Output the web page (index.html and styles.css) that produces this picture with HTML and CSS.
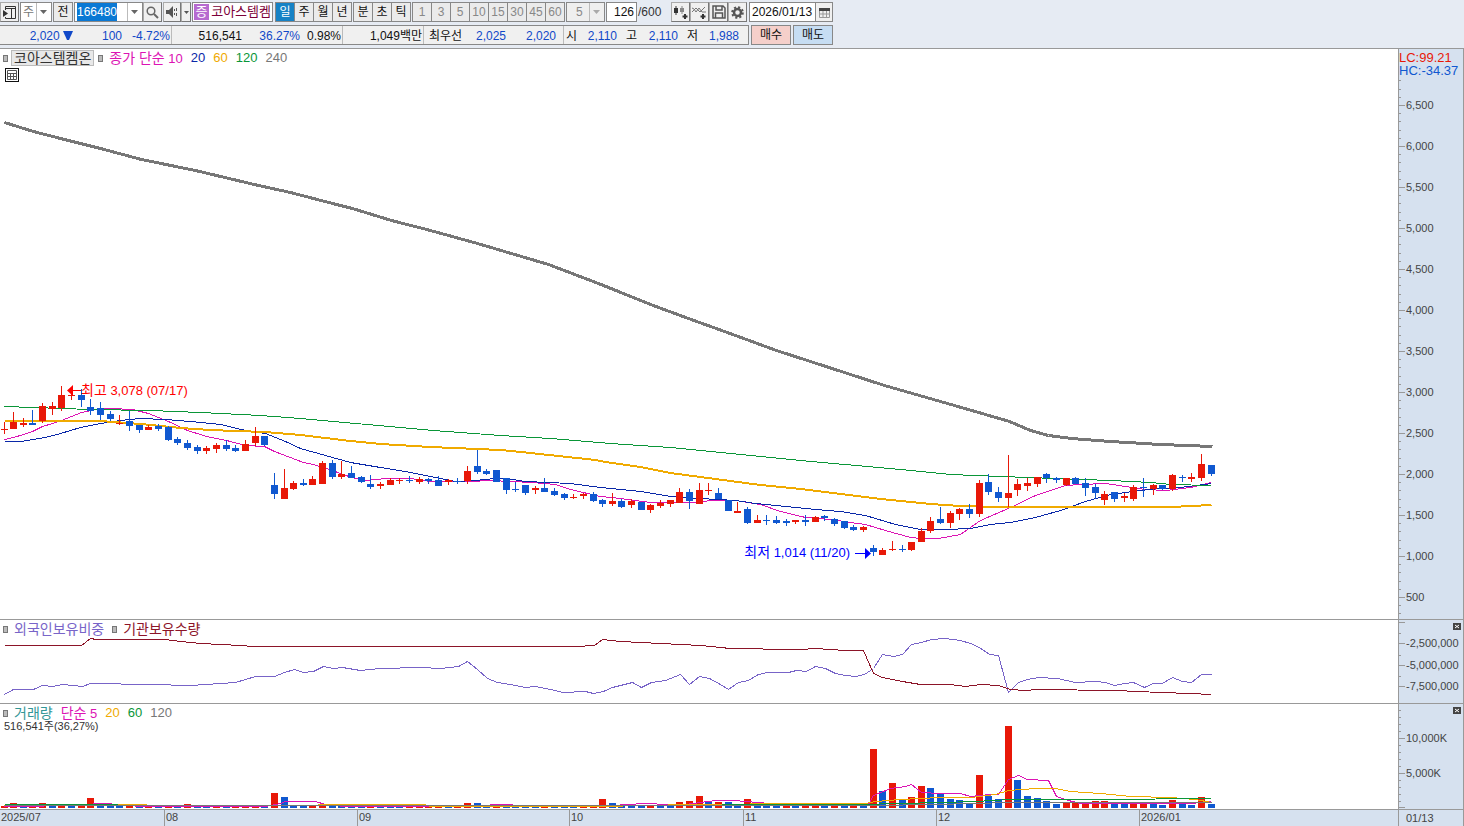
FILE: index.html
```html
<!DOCTYPE html>
<html lang="ko">

<head>
  <meta charset="utf-8">
  <meta name="viewport" content="width=device-width, initial-scale=1">
  <title>코아스템켐온 - 종합차트</title>
  <link rel="stylesheet" href="styles.css">
</head>

<body>
  <header>
    <div class="toolbar">
      <button class="tool" aria-label="패널">
        <svg width="15" height="13" viewBox="0 0 15 13"><path d="M3.500 4V.5h10v12h-10V11M4 2.500h9M9.500 3v9" fill="none" stroke="#333"/><path d="M1 4l5 3.500L1 11z" fill="#333"/></svg>
      </button>
      <span class="combo market">
        <select aria-label="시장"><option>주</option></select>
        <svg class="arrow" width="7" height="4"><path d="M0 0h7L3.500 4z"/></svg>
      </span>
      <button class="key prev">전</button>
      <span class="combo code">
        <input id="code" type="text" value="166480" aria-label="종목코드">
        <svg class="arrow" width="7" height="4"><path d="M0 0h7L3.500 4z"/></svg>
      </span>
      <button class="tool" aria-label="검색">
        <svg width="13" height="13" viewBox="0 0 13 13" fill="none" stroke="#666"><circle cx="5" cy="5" r="3.800" stroke-width="1.500"/><path d="M8 8l4 4" stroke-width="2"/></svg>
      </button>
      <button class="tool speaker" aria-label="소리">
        <svg width="13" height="12" viewBox="0 0 13 12" fill="#555"><path d="M0 4h3l4-4v12L3 8H0zM8 3h1v2H8zM8 7h1v2H8zM10 2h1v3h-1zM10 7h1v3h-1z"/></svg>
      </button>
      <button class="tool drop" aria-label="소리 설정">
        <svg width="5" height="3"><path d="M0 0h5L2.500 3z" fill="#555"/></svg>
      </button>
      <div class="stock"><b>증</b><span>코아스템켐</span></div>
      <div class="keys">
        <button class="key on">일</button><button class="key">주</button><button class="key">월</button><button class="key">년</button>
      </div>
      <div class="keys units">
        <button class="key">분</button><button class="key">초</button><button class="key">틱</button>
      </div>
      <div class="keys minutes">
        <button class="key" disabled>1</button><button class="key" disabled>3</button><button class="key" disabled>5</button><button class="key" disabled>10</button><button class="key" disabled>15</button><button class="key" disabled>30</button><button class="key" disabled>45</button><button class="key" disabled>60</button>
      </div>
      <span class="combo custom">
        <select aria-label="분 간격" disabled><option>5</option></select>
        <svg class="arrow" width="7" height="4"><path d="M0 0h7L3.500 4z"/></svg>
      </span>
      <label class="count"><input type="text" value="126" aria-label="봉 개수">/600</label>
      <div class="keys tools">
        <button class="tool" aria-label="차트 추가">
          <svg width="15" height="15" viewBox="0 0 15 15"><path d="M1 3h4v5H1zM2.500 1h1v9h-1z" fill="#333"/><path d="M7 3h4v4H7zM8.500 1h1v8h-1z" fill="#888"/><path d="M12 9v5M9.500 11.500h5" stroke="#333" stroke-width="2"/></svg>
        </button><button class="tool" aria-label="지표 추가">
          <svg width="15" height="15" viewBox="0 0 15 15" fill="none"><path d="M0 7l4-4 4 4 5-5M0 3l2 1 2 3 3-4 3 4 4 0" stroke="#777"/><path d="M11 9v5M8.500 11.500h5" stroke="#333" stroke-width="2"/></svg>
        </button><button class="tool" aria-label="저장">
          <svg width="14" height="14" viewBox="0 0 14 14" fill="none" stroke="#555" stroke-width="1.500"><path d="M1 1h10l2 2v10H1zM4 1v4h6V1M3.500 13V8h7v5"/></svg>
        </button><button class="tool" aria-label="설정">
          <svg width="13" height="13" viewBox="0 0 13 13" fill="none" stroke="#555"><circle cx="6.500" cy="6.500" r="3.500" stroke-width="2.500"/><circle cx="6.500" cy="6.500" r="5.300" stroke-width="2" stroke-dasharray="2.100 2.060"/></svg>
        </button>
      </div>
      <div class="date">
        <input type="text" value="2026/01/13" aria-label="기준일">
        <button aria-label="달력"><svg width="11" height="11" viewBox="0 0 11 11"><path d="M0 1h11v3H0z" fill="#444"/><path d="M.5 4v6.500h10V4M4 4v6M7.500 4v6M0 7h11" fill="none" stroke="#999"/></svg></button>
      </div>
    </div>

    <div class="quote">
      <div class="strip">
        <div class="cell price"><span>2,020 <svg width="10" height="9"><path d="M0 0h10L6 9H4z" fill="#1048c8"/></svg></span><span>100</span><span>-4.72%</span></div>
        <div class="cell volume"><span class="dark">516,541</span><span>36.27%</span><span class="dark">0.98%</span></div>
        <div class="cell amount"><span class="dark">1,049백만</span></div>
        <div class="cell best"><span class="dark">최우선</span><span>2,025</span><span>2,020</span></div>
        <div class="cell ohl"><span class="dark">시</span><span>2,110</span><span class="dark">고</span><span>2,110</span><span class="dark">저</span><span>1,988</span></div>
      </div>
      <button class="order buy">매수</button>
      <button class="order sell">매도</button>
    </div>
  </header>

  <main class="chart">
    <section class="panel">
      <svg id="price"></svg>
      <div class="legend">
        <i></i><button class="name">코아스템켐온</button><i></i>
        <span class="c-magenta"><em>종가 단순</em> 10</span><span class="c-navy">20</span><span class="c-yellow">60</span><span class="c-green">120</span><span class="c-gray">240</span>
      </div>
      <button class="grid-btn" aria-label="표"><svg width="10" height="10" viewBox="0 0 10 10" fill="none" stroke="#555"><path d="M.5.5h9v9h-9zM0 3.500h10M0 6.500h10M3.500 3v7M6.500 3v7"/></svg></button>
    </section>
    <aside class="axis">
      <svg id="price-axis"></svg>
      <div class="range"><span class="c-red">LC:99.21</span><span class="c-blue">HC:-34.37</span></div>
    </aside>

    <section class="panel">
      <svg id="holding"></svg>
      <div class="legend"><i></i><em class="c-purple">외국인보유비중</em><i></i><em class="c-maroon">기관보유수량</em></div>
    </section>
    <aside class="axis">
      <svg id="holding-axis"></svg>
      <button class="close" aria-label="닫기"><svg width="8" height="7"><path d="M2 2l4 3M6 2L2 5" stroke="#fff"/></svg></button>
    </aside>

    <section class="panel">
      <svg id="volume"></svg>
      <div class="legend"><i></i><em class="c-teal">거래량</em><span class="c-magenta"><em>단순</em> 5</span><span class="c-yellow">20</span><span class="c-green">60</span><span class="c-gray">120</span></div>
      <p class="now">516,541주(36,27%)</p>
    </section>
    <aside class="axis">
      <svg id="volume-axis"></svg>
      <button class="close" aria-label="닫기"><svg width="8" height="7"><path d="M2 2l4 3M6 2L2 5" stroke="#fff"/></svg></button>
    </aside>

    <div class="months"><svg id="months"></svg></div>
    <div class="last-day">01/13</div>
  </main>

  <script src="chart.js"></script>
</body>

</html>
```
FILE: styles.css
```css
* {
  box-sizing: border-box;
}

body {
  margin: 0;
  height: 100vh;
  display: flex;
  flex-direction: column;
  overflow: hidden;
  background: #fff;
  color: #111;
  font: 12px "Liberation Sans", "Noto Sans CJK KR", sans-serif;
}

button,
input,
select {
  margin: 0;
  padding: 0;
  font: inherit;
  color: inherit;
  border: 1px solid #888;
  border-radius: 0;
  appearance: none;
}

svg {
  display: block;
}

header {
  flex: none;
  height: 49px;
  padding-top: 2px;
  background: #e6ebf3;
  border-bottom: 1px solid #999;
}

/* toolbar */

.toolbar {
  display: flex;
  height: 20px;
  margin-bottom: 3px;
  white-space: nowrap;
}

.toolbar > * {
  flex: none;
}

.tool {
  width: 19px;
  height: 20px;
  display: flex;
  align-items: center;
  justify-content: center;
  background: #f0f0f0;
  border-color: #aaa #777 #777 #aaa;
}

.tool.speaker {
  width: 18px;
  margin-left: 1px;
}

.tool.drop {
  width: 10px;
}

.combo {
  position: relative;
  display: flex;
  height: 20px;
}

.combo select,
.combo input {
  width: 100%;
  background: #fff;
  line-height: 18px;
}

.combo::after {
  content: "";
  position: absolute;
  top: 1px;
  right: 15px;
  height: 18px;
  border-left: 1px solid #bbb;
}

.arrow {
  position: absolute;
  right: 5px;
  top: 8px;
  fill: #666;
  pointer-events: none;
}

.market {
  width: 32px;
  margin: 0 1px;
}

.market select {
  padding-left: 2px;
  color: #777;
}

.code {
  width: 69px;
}

.code input {
  padding-left: 2px;
}

.code input::selection {
  background: #0a78d4;
  color: #fff;
}

input:focus {
  outline: none;
}

.key {
  width: 20px;
  height: 20px;
  margin-right: -1px;
  background: #ebebeb;
  line-height: 18px;
}

.prev {
  margin: 0 1px 0 0;
}

.key.on {
  background: #1682c5;
  color: #fff;
}

.key:disabled {
  color: #888;
}

.keys {
  display: flex;
  margin-left: 2px;
}

.stock {
  width: 81px;
  margin-left: 1px;
  padding: 1px;
  display: flex;
  gap: 2px;
  overflow: hidden;
  border: 1px solid #888;
  background: #fff;
  color: #7c0038;
  font-size: 13px;
  line-height: 16px;
}

.stock b {
  width: 16px;
  background: #b66ad0;
  color: #fff;
  font-weight: normal;
  text-align: center;
}

.custom {
  width: 39px;
  margin-left: 2px;
}

.custom select {
  padding-left: 9px;
  background: #efefef;
  color: #888;
  opacity: 1;
}

.custom .arrow {
  fill: #aaa;
}

.count {
  display: flex;
  width: 65px;
  margin-left: 1px;
  line-height: 20px;
  color: #333;
}

.count input {
  width: 31px;
  padding-right: 2px;
  margin-right: 1px;
  text-align: right;
  color: #111;
  background: #fff;
}

.keys.tools {
  margin-left: 0;
}

.date {
  display: flex;
  width: 84px;
  margin-left: 2px;
  border: 1px solid #888;
  background: #fff;
}

.date input {
  width: 65px;
  padding-left: 2px;
  border: 0;
  background: none;
}

.date button {
  flex: 1;
  display: flex;
  align-items: center;
  justify-content: center;
  border-width: 0 0 0 1px;
  background: #f0f0f0;
}

/* quote line */

.quote {
  display: flex;
  height: 20px;
}

.strip {
  display: flex;
  width: 749px;
  margin-right: 2px;
  background: #f0f0f0;
  border: 1px solid #888;
  border-left: 0;
  color: #1048c8;
  line-height: 20px;
}

.cell {
  display: grid;
  padding-right: 1px;
  border-right: 1px solid #bbb;
  text-align: right;
  white-space: nowrap;
}

.cell:last-child {
  border-right: 0;
}

.cell svg {
  display: inline-block;
}

.dark {
  color: #111;
}

.price {
  width: 172px;
  grid-template-columns: 73px 49px 1fr;
}

.volume {
  width: 171px;
  grid-template-columns: 70px 58px 1fr;
}

.amount {
  width: 81px;
}

.best {
  width: 140px;
  grid-template-columns: 38px 44px 50px;
}

.ohl {
  width: 183px;
  padding-left: 1px;
  grid-template-columns: 12px 40px 20px 41px 20px 41px;
}

.order {
  width: 40px;
  margin-right: 2px;
  background: #f5cfca;
  line-height: 18px;
}

.sell {
  background: #c6ddf3;
}

/* chart */

.chart {
  flex: 1;
  min-height: 0;
  display: grid;
  grid-template-columns: minmax(0, 1fr) 66px;
  grid-template-rows: minmax(0, 571fr) minmax(0, 84fr) minmax(0, 106fr) 16px;
}

.panel,
.axis {
  position: relative;
  min-height: 0;
  overflow: hidden;
  border-bottom: 1px solid #999;
}

.axis,
.last-day {
  background: #d6e1ef;
  border-left: 1px solid #999;
  border-right: 1px solid #999;
}

.chart > * > svg {
  width: 100%;
  height: 100%;
}

.months {
  background: #d6e1ef;
  overflow: hidden;
}

.last-day {
  padding-left: 7px;
  color: #444;
  font-size: 11px;
  line-height: 16px;
}

.chart text {
  fill: #444;
  font-size: 11px;
}

.chart text.note {
  font-size: 13px;
}

.legend {
  position: absolute;
  top: 1px;
  left: 3px;
  display: flex;
  align-items: center;
  gap: 8px;
  height: 16px;
  font-size: 13px;
  line-height: 16px;
  white-space: nowrap;
}

.legend i {
  width: 5px;
  height: 7px;
  margin-right: -2px;
  background: #bbb;
  border: 1px solid #777;
}

.legend em {
  font-size: 14px;
  font-style: normal;
}

.legend .name {
  height: 16px;
  margin: 0 -4px 0 -3px;
  padding: 0 2px;
  border-color: #bbb;
  background: #e8e8e8;
  color: #333;
  font-size: 14px;
  line-height: 14px;
}

.grid-btn {
  position: absolute;
  top: 19px;
  left: 5px;
  width: 14px;
  height: 14px;
  padding: 1px;
  border-color: #111;
  background: #fff;
}

.now {
  position: absolute;
  top: 15px;
  left: 4px;
  margin: 0;
  color: #333;
  font-size: 11px;
  line-height: 14px;
}

.range {
  position: absolute;
  top: 2px;
  left: 0;
  display: flex;
  flex-direction: column;
  font-size: 13px;
  line-height: 13px;
}

.close {
  position: absolute;
  top: 3px;
  right: 2px;
  width: 8px;
  height: 7px;
  border: 0;
  background: #444;
}

.c-magenta { color: #dc14b4; }
.c-navy { color: #0a28a8; }
.c-yellow { color: #f0aa00; }
.c-green { color: #0a9638; }
.c-gray { color: #777; }
.c-purple { color: #7864c8; }
.c-maroon { color: #8c1428; }
.c-teal { color: #329696; }
.c-red { color: #e81808; }
.c-blue { color: #1058d0; }
```
FILE: chart.js
```js
var RED = '#e81808', BLUE = '#1058d0', LINE = '#999';
var BASE_WIDTH = 1398, FIRST = 4, STEP = 9.656;

// direction, high, body top, body bottom, low
var candles = `
r 422 429 430 434|r 412 422 429 429|r 418 423 425 427|b 410 423 425 425|r 403 406 421 423|r 402 406 409 415
r 386 395 408 411|r 393 395 396 400|b 389 395 400 407|b 399 407 411 415|b 402 408 415 420|b 411 414 419 421
r 415 423 424 425|b 411 421 426 431|b 425 425 430 433|r 425 427 430 430|b 424 426 429 431|b 426 427 440 441
b 437 439 443 445|b 440 443 448 450|b 445 447 451 454|r 446 448 451 454|r 443 445 449 453|b 440 445 449 451
b 445 448 451 452|r 440 444 451 451|r 427 436 443 446|b 436 436 445 446|b 473 485 494 499|r 469 488 499 499
r 481 483 489 490|b 479 483 485 486|r 476 479 485 485|r 461 463 484 484|b 460 463 477 479|r 461 474 477 479
b 466 473 478 478|b 476 477 482 483|b 475 484 487 489|r 482 484 486 489|r 478 480 485 485|r 478 480 481 484
b 476 480 481 483|r 477 479 482 484|b 478 479 481 484|b 476 480 486 486|r 479 480 482 485|b 478 481 482 484
r 466 471 481 484|b 450 466 472 474|b 469 471 474 475|b 470 470 482 482|b 478 478 490 494|b 482 489 490 492
b 485 485 493 495|r 486 488 490 494|b 478 488 492 492|b 488 491 495 496|b 493 494 498 500|r 494 497 498 499
r 493 494 496 499|b 492 494 501 502|b 499 500 504 507|r 493 501 504 506|b 499 501 507 508|r 499 501 505 508
b 502 502 510 510|r 504 505 510 513|r 500 503 506 508|r 500 500 504 507|r 488 492 503 503|b 489 492 501 509
r 483 490 504 504|r 483 490 491 495|b 488 493 499 499|b 500 500 511 511|r 502 511 513 513|b 507 509 523 524
r 515 520 523 523|b 515 520 521 525|b 516 520 523 524|b 519 521 523 526|r 520 520 522 524|b 515 520 522 526
r 516 517 522 522|b 515 516 518 521|b 518 519 524 526|b 521 521 528 529|b 525 527 530 531|r 526 527 530 532
b 545 548 552 556|r 548 550 555 555|r 541 549 550 551|b 545 549 550 552|r 542 542 550 551|r 528 531 542 542
r 517 521 531 533|b 507 519 523 524|r 511 513 523 528|r 508 509 514 520|b 504 509 514 518|r 480 483 514 517
b 474 482 492 495|b 487 492 498 502|r 455 493 498 507|r 479 484 490 496|r 478 483 486 491|r 477 477 484 487
b 473 474 478 483|b 477 478 480 483|r 478 478 485 486|b 477 478 484 484|b 478 483 488 496|b 484 487 493 499
r 491 494 500 505|b 492 492 499 502|r 493 496 498 502|r 485 487 499 501|b 478 487 488 497|r 484 485 489 495
b 485 485 489 490|r 474 475 489 491|b 475 477 478 482|r 473 477 479 482|r 454 464 478 481|b 465 465 474 476`
  .trim().split(/[|\n]/).map(function (row) {
    var v = row.split(' ');
    return { up: v[0] == 'r', high: +v[1], top: +v[2], bottom: +v[3], low: +v[4] };
  });

// bar direction and height
var volumes = ('r2 r5 b3 r3 r5 b3 r3 b3 r3 r10 b4 b3 b3 r3 b3 r2 b2 r2 b2 r4 b2 b2 r2 b2 r2 r2 r2 b2 r15 b11 ' +
  'b3 b3 r3 r3 b3 b3 b2 b2 r2 b2 b2 b2 r2 r2 r2 r2 b2 r2 r5 b5 b3 r4 b3 b2 b2 b2 r2 b2 b2 b2 r2 r2 r9 b5 b3 b4 b2 ' +
  'r3 b2 b3 r6 r7 r12 b6 r6 b6 b3 r9 b3 b3 b3 r2 b3 r2 r2 b2 r2 b2 r2 b2 r59 b17 r25 b8 r11 r22 b20 b14 b9 b8 b5 ' +
  'r33 b12 b9 r82 b28 b12 b10 b7 b4 r5 r5 r5 r7 r7 b5 b5 r5 r5 b4 b3 r8 b4 b3 r11 b4').split(' ');

var priceLines = [
  ['#dc14b4', 1, '4,439 13,437 23,434 32,431 42,426 52,423 61,420 71,416 81,412 95,409 110,408 132,409 148,413 168,421 187,430 206,436 226,440 245,445 264,446 274,451 303,462 313,464 332,470 351,477 366,480 385,478 410,478 430,481 450,481 470,481 490,480 510,481 532,482 555,484 570,489 600,496 620,498 650,502 670,502 695,502 710,500 735,500 760,504 780,511 805,517 830,519 850,522 865,524 885,530 910,537 920,538 938,538 960,534 980,520 1010,507 1035,495 1065,485 1080,484 1105,483 1125,486 1145,489 1165,490 1190,487 1211,482'],
  ['#0a28a8', 1, '4,441 20,441 45,437 60,433 80,427 100,423 120,420 140,418 165,419 190,421 220,424 245,430 265,433 285,441 300,448 325,455 350,462 380,467 410,472 435,477 455,481 475,480 495,478 505,478 525,481 570,483 600,487 640,491 670,496 700,498 735,500 755,503 785,506 815,509 840,511 865,515 895,524 920,529 945,529 970,528 990,524 1010,522 1035,517 1060,510 1085,501 1110,494 1140,490 1160,488 1180,487 1211,483'],
  ['#f0aa00', 2, '4,420 60,420 100,420 140,423 180,427 210,429 235,430 265,431 300,434 350,440 380,443 430,446 500,449 530,452 567,456 595,459 605,461 640,466 670,472 700,476 730,480 760,484 800,488 840,493 880,498 900,500 930,503 960,505 1000,506 1170,506 1211,504'],
  ['#0a9638', 1, '4,406 90,409 150,410 200,412 260,415 300,418 433,430 500,435 550,438 610,443 670,447 720,452 800,460 900,469 950,474 1000,476 1110,480 1150,482 1170,484 1211,485'],
  ['#777', 3, '4,122 33,131 60,138 100,148 141,159 195,170 258,185 290,192 336,204 352,208 391,220 430,230 477,243 548,264 598,283 618,291 650,304 688,318 735,335 776,350 810,361 884,385 954,405 1009,421 1030,430 1048,435 1071,438 1110,441 1160,444 1212,446']
];

var holdingLines = [
  ['#7864c8', 1, '4,694 13,689 33,689 42,685 52,686 62,684 82,686 90,683 150,684 190,685 220,683 235,682 255,676 274,676 284,672 294,669 303,672 313,671 323,666 333,668 342,667 360,670 380,668 420,667 440,668 458,666 467,661 477,669 487,678 497,682 510,684 525,687 535,686 550,689 563,692 585,691 593,693 603,691 612,687 632,682 641,687 651,682 665,680 680,674 689,684 699,676 709,678 720,684 728,689 738,682 748,680 758,674 767,672 788,672 796,670 806,671 815,666 825,668 835,673 845,675 855,676 864,674 873,668 882,654 893,656 902,654 911,644 921,642 931,639 945,638 960,640 970,643 979,647 989,654 998,655 1008,692 1018,682 1027,679 1038,677 1057,678 1075,682 1095,681 1105,682 1114,685 1124,683 1133,682 1144,687 1153,683 1162,683 1172,677 1182,681 1191,682 1201,674 1211,674'],
  ['#8c1428', 1, '4,645 81,645 90,638 96,639 164,639 180,641 200,643 240,645 252,646 575,646 594,645 602,639 620,641 660,643 700,645 730,648 750,648 775,649 800,649 815,648 845,650 863,650 873,673 882,677 902,681 920,684 950,684 965,686 980,684 998,685 1010,689 1025,690 1037,689 1115,690 1160,692 1190,693 1211,694']
];

var volumeLines = [
  ['#dc14b4', 1, '4,806 85,805 95,803 106,803 140,806 245,806 265,806 280,803 285,801 315,801 325,804 345,806 460,806 500,804 510,804 520,806 605,806 625,804 647,803 665,804 685,804 700,802 715,800 733,800 745,801 770,803 800,804 860,805 868,804 873,795 890,788 905,786 911,784 921,792 940,793 960,793 970,796 990,794 998,794 1008,779 1018,775 1027,779 1048,780 1056,796 1068,800 1080,803 1190,803 1211,801'],
  ['#f0aa00', 1, '4,805 115,804 143,804 150,805 315,805 320,804 424,804 430,806 600,806 690,804 740,804 760,803 865,803 875,801 900,799 940,797 970,797 995,794 1008,790 1035,788 1055,788 1070,791 1100,793 1130,796 1170,797 1195,799 1211,802'],
  ['#0a9638', 1, '4,804 115,804 120,805 720,805 724,804 860,804 940,802 975,801 1010,799 1100,799 1211,798'],
  ['#777', 1, '4,805 870,805 935,804 1010,802 1211,802']
];

var months = [[0, '2025/07'], [164, '08'], [357, '09'], [569, '10'], [743, '11'], [936, '12'], [1139, '2026/01']];

// maps chart units to the current size of the panel
function scale(id, top, height) {
  var svg = document.getElementById(id);
  var kx = svg.clientWidth / BASE_WIDTH, ky = svg.clientHeight / height;
  return {
    svg: svg,
    x: function (v) { return Math.floor(v * kx); },
    y: function (v) { return Math.round((v - top) * ky); }
  };
}

function rect(x, y, w, h, fill) {
  return '<rect x="' + x + '" y="' + y + '" width="' + w + '" height="' + Math.max(h, 1) + '" fill="' + fill + '"/>';
}

function text(x, y, str, attrs) {
  return '<text x="' + x + '" y="' + y + '" ' + (attrs || '') + '>' + str + '</text>';
}

function lines(s, list) {
  return list.map(function (l) {
    var pts = l[2].split(' ').map(function (p) {
      p = p.split(',');
      return (s.x(+p[0]) + 0.5) + ',' + (s.y(+p[1]) + (l[1] == 2 ? 1 : 0.5));
    }).join(' ');
    return '<polyline points="' + pts + '" fill="none" stroke="' + l[0] + '" stroke-width="' + l[1] + '" shape-rendering="crispEdges"/>';
  }).join('');
}

function drawPrice() {
  var s = scale('price', 49, 570), out = lines(s, priceLines);
  candles.forEach(function (c, i) {
    var x = s.x(FIRST + i * STEP), color = c.up ? RED : BLUE;
    out += rect(x, s.y(c.high), 1, s.y(c.low) - s.y(c.high), color);
    out += rect(x - 3, s.y(c.top), 7, s.y(c.bottom) - s.y(c.top), color);
  });
  var hx = s.x(67), hy = s.y(390), lx = s.x(870), ly = s.y(553);
  out += '<path d="M' + hx + ' ' + (hy + .5) + 'l6-5.500v5h8v1h-8v5z" fill="#f00"/>';
  out += text(hx + 14, hy + 5, '<tspan font-size="14">최고</tspan> 3,078 (07/17)', 'class="note" style="fill:#f00"');
  out += '<path d="M' + (lx + 1) + ' ' + (ly + .5) + 'l-6-5.500v5h-10v1h10v5z" fill="#00f"/>';
  out += text(lx - 20, ly + 4, '<tspan font-size="14">최저</tspan> 1,014 (11/20)', 'class="note" text-anchor="end" style="fill:#00f"');
  s.svg.innerHTML = out;
}

function drawVolume() {
  var s = scale('volume', 704, 105), out = '';
  volumes.forEach(function (v, i) {
    var top = s.y(808 - v.slice(1));
    out += rect(s.x(FIRST + i * STEP) - 3, top, 7, s.y(808) - top, v[0] == 'r' ? RED : BLUE);
  });
  s.svg.innerHTML = out + lines(s, volumeLines);
}

function drawAxis(id, top, height, labels, minor) {
  var s = scale(id, top, height), out = '';
  minor.forEach(function (y) { out += rect(0, s.y(y), 2, 1, LINE); });
  labels.forEach(function (l) {
    out += rect(0, s.y(l[0]), 6, 1, LINE);
    out += text(l[1][0] == '-' ? 7 : 7, s.y(l[0]) + 4, l[1]);
  });
  s.svg.innerHTML = out;
}

function drawMonths() {
  var s = scale('months', 0, 16), out = '';
  months.forEach(function (m) {
    if (m[0]) out += rect(s.x(m[0]), 0, 1, 16, LINE);
    out += text(s.x(m[0]) + (m[0] ? 2 : 1), 11, m[1]);
  });
  s.svg.innerHTML = out;
}

function ticks(from, to, step) {
  var list = [];
  for (var y = from; y <= to; y += step) list.push(y);
  return list;
}

function draw() {
  var prices = [];
  for (var i = 0; i < 13; i++) {
    prices.push([105 + i * 41, (6500 - i * 500).toLocaleString('en-US')]);
  }
  drawPrice();
  drawVolume();
  var h = scale('holding', 620, 83);
  h.svg.innerHTML = lines(h, holdingLines);
  drawAxis('price-axis', 49, 570, prices, ticks(80.4, 615, 8.2));
  drawAxis('holding-axis', 620, 83, [[622, ''], [643, '-2,500,000'], [665, '-5,000,000'], [686, '-7,500,000']], [633, 655, 676]);
  drawAxis('volume-axis', 704, 105, [[738, '10,000K'], [773, '5,000K'], [807, '']], ticks(710, 805, 7));
  drawMonths();
}

draw();
window.addEventListener('resize', draw);

var code = document.getElementById('code');
code.focus();
code.select();
```
